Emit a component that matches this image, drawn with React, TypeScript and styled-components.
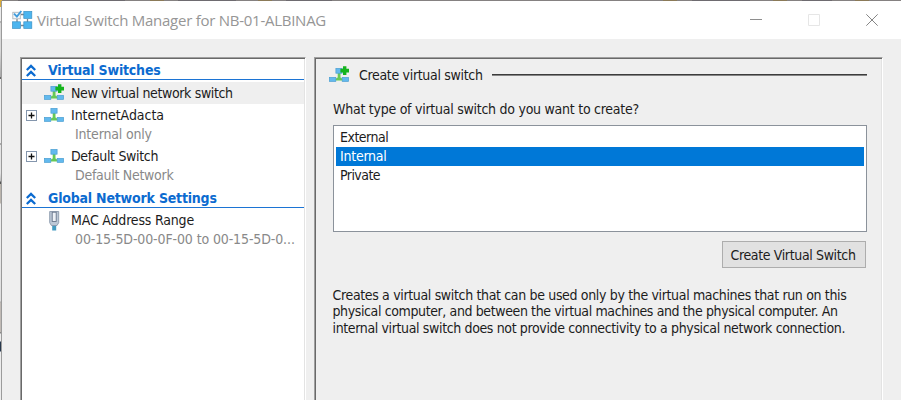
import React from 'react';
import styled, { createGlobalStyle } from 'styled-components';

const Global = createGlobalStyle`
  * { box-sizing: border-box; }
  body { margin: 0; overflow: hidden; }
`;

const Desktop = styled.div`
  display: grid;
  grid-template: 1px 399px / 1px 900px;
  width: 901px;
  height: 400px;
  overflow: hidden;
  background: #e9e9e9;
`;

const TopEdge = styled.div`
  grid-column: 1 / 3;
  background: linear-gradient(90deg, #d9ab3a 0 2px, #858181 2px 18px, #6e6b70 18px 125px, #858181 125px 150px,
    #8b7a58 150px 164px, #858181 164px 178px, #6e6b70 178px 236px, #858181 236px 258px, #8b7a58 258px 272px,
    #858181 272px 286px, #6e6b70 286px 332px, #858181 332px 663px, #8b7a58 663px 677px, #858181 677px 692px,
    #6e6b70 692px 750px, #858181 750px 773px, #8b7a58 773px 787px, #858181 787px 802px, #6e6b70 802px 832px,
    #858181 832px 855px, #8b7a58 855px 869px, #858181 869px);
`;

const LeftEdge = styled.div`
  background: linear-gradient(#d9ab3a 0 6px, #ececec 6px 20px, #b4b4b4 20px 22px, #d8d8d8 22px 50px, #a8a8a8 76px,
    #666 76px 78px, #ececec 78px 142px, #aaa 142px 144px, #e4e4e4 144px 172px, #bbb 180px, #555 181px 183px,
    #bab4ac 183px 202px, #ececec 203px 240px, #ddd 300px, #aaa 301px, #c0bab5 302px 331px, #888 331px 332px,
    #ececec 333px 340px, #27384d 341px 350px, #ececec 351px);
`;

const Window = styled.div`
  display: flex;
  flex-direction: column;
  border-left: 1px solid #9b9b9b;
  background: #efefef;
  font-family: 'DejaVu Sans Condensed', 'DejaVu Sans', sans-serif;
  font-size: 14px;
  color: #1c1c1c;
`;

const TitleBar = styled.header`
  display: flex;
  align-items: center;
  height: 38px;
  flex: none;
  padding-left: 10px;
  background: #fff;
`;

const Title = styled.h1`
  flex: 1;
  margin: 0 0 0 4px;
  font: 400 15px/20px 'Open Sans', 'Noto Sans', sans-serif;
  letter-spacing: -0.26px;
  color: #969696;
`;

const Controls = styled.div`
  display: flex;
  gap: 46px;
  padding-right: 23px;
`;

const Panes = styled.main`
  display: grid;
  grid-template-columns: 286px 569px;
  gap: 8px;
  flex: 1;
  padding: 18px 0 0 18px;
`;

const Pane = styled.section<{ $fill: string }>`
  border: 1px solid #a0a0a0;
  border-right-color: #fff;
  border-bottom: 0;
  box-shadow: inset 1px 1px #696969, inset -1px 0 #e3e3e3;
  background: ${p => p.$fill};
`;

const Tree = styled.nav`
  display: flex;
  flex-direction: column;
  padding: 1px 1px 0;
`;

const Heading = styled.h2<{ $top?: number; $bottom?: number }>`
  display: flex;
  align-items: center;
  height: 21px;
  margin: ${p => p.$top || 0}px 0 ${p => p.$bottom || 0}px;
  padding: 2px 0 0 4px;
  border-bottom: 1px solid #1c74d4;
  font: bold 14px/18px 'DejaVu Sans Condensed', 'DejaVu Sans', sans-serif;
  color: #0c6bd0;
`;

const Label = styled.span<{ $track: number }>`
  white-space: nowrap;
  letter-spacing: ${p => p.$track}px;
`;

const HeadingLabel = styled(Label)`
  margin-left: 12px;
`;

const TreeRow = styled.div<{ $active?: boolean }>`
  display: grid;
  grid-template-columns: 18px 27px 1fr;
  align-items: center;
  height: 22px;
  padding-left: 4px;
  background: ${p => (p.$active ? '#efefef' : 'transparent')};
`;

const Detail = styled.div`
  height: 19px;
  padding-left: 53px;
  line-height: 17px;
  color: #898989;
`;

const Form = styled.div`
  padding: 7px 15px 0 18px;
`;

const FormHead = styled.div`
  display: flex;
  align-items: center;
  height: 20px;
  margin-left: -4px;
`;

const FormTitle = styled(Label)`
  margin-left: 10px;
  width: 133px;
`;

const Rule = styled.div`
  flex: 1;
  height: 2px;
  border-top: 1px solid #3c3c3c;
  border-bottom: 1px solid #868686;
`;

const Question = styled.div`
  height: 23px;
  margin-top: 16px;
  line-height: 17px;
`;

const List = styled.ul`
  height: 107px;
  margin: 1px 0 0;
  padding: 2px;
  list-style: none;
  border: 1px solid #8b929b;
  background: #fff;
`;

const Option = styled.li<{ $selected?: boolean }>`
  height: 19px;
  padding-left: 4px;
  line-height: 18px;
  background: ${p => (p.$selected ? '#0078d7' : 'transparent')};
  color: ${p => (p.$selected ? '#fff' : 'inherit')};
`;

const Actions = styled.div`
  display: flex;
  justify-content: flex-end;
  padding: 9px 1px 0 0;
`;

const Button = styled.button`
  width: 144px;
  height: 27px;
  padding: 0 2px 0 0;
  border: 1px solid #adadad;
  background: #e1e1e1;
  color: inherit;
  font: inherit;
`;

const Description = styled.p`
  display: flex;
  flex-direction: column;
  margin: 19px 0 0 -0.5px;
  line-height: 16.4px;
`;

const Chevrons = () => (
  <svg width="10" height="13" viewBox="0 0 10 13" fill="none" stroke="#0c6bd0" strokeWidth="2.3">
    <path d="M.8 6 5 1.9 9.2 6M.8 12 5 7.9 9.2 12" />
  </svg>
);

const Expander = () => (
  <svg width="11" height="11" viewBox="0 0 11 11">
    <rect x=".5" y=".5" width="10" height="10" fill="#fff" stroke="#8496ad" />
    <path d="M2.5 5.5h6M5.5 2.5v6" stroke="#111" strokeWidth="1.3" />
  </svg>
);

const SwitchIcon = ({ plus }: { plus?: boolean }) => (
  <svg width="20" height="18" viewBox="0 0 20 18">
    <path d="M8.7 7h2.8v4.5l2 1.2v1.8h-7v-1.8l2.2-1.2z" fill="#66c956" />
    <rect x="6.9" y="2.4" width="6.2" height="4.8" fill="#62b9ee" stroke="#4c9fd2" strokeWidth=".7" />
    <rect x=".4" y="11.4" width="6.4" height="4" fill="#62b9ee" stroke="#4c9fd2" strokeWidth=".7" />
    <rect x="13.2" y="11.4" width="6.4" height="4" fill="#62b9ee" stroke="#4c9fd2" strokeWidth=".7" />
    {plus && <path d="M14 .2h3.4v2.6H20v3.6h-2.6V9H14V6.4h-2.6V2.8H14z" fill="#15b41c" />}
  </svg>
);

const AdapterIcon = () => (
  <svg width="20" height="21" viewBox="-5 0 20 21">
    <path d="M3.2 15h4v5.5h-4z" fill="#459bc0" />
    <path d="M.7 1.5h9v11.2L8 15.5H2.4L.7 12.7z" fill="#bdc8d6" stroke="#8a98ab" strokeWidth=".9" />
    <rect x="3.2" y="2.2" width="4" height="9.3" fill="#edf1f6" stroke="#68768a" strokeWidth=".9" />
  </svg>
);

const AppIcon = () => (
  <svg width="21" height="20" viewBox="0 0 21 20">
    <path d="M9 4.5h3M5 9v3M15.5 9v3M9 15.5h3" stroke="#7c858d" strokeWidth="1.3" />
    <rect x=".8" y="2.3" width="7.5" height="6.5" fill="#f5f8fa" stroke="#b0b6bc" strokeWidth=".9" />
    <path d="m2 3.6 2.9 3L9.3 1" fill="none" stroke="#3f9bdc" strokeWidth="1.9" />
    <rect x="11.8" y="1.4" width="8" height="7" fill="#4cb5ef" stroke="#3b92c6" strokeWidth=".7" />
    <rect x=".5" y="11.8" width="8" height="6.6" fill="#4cb5ef" stroke="#3b92c6" strokeWidth=".7" />
    <rect x="11.8" y="11.8" width="8" height="6.6" fill="#4cb5ef" stroke="#3b92c6" strokeWidth=".7" />
  </svg>
);

const ControlIcon = ({ d, color }: { d: string; color: string }) => (
  <svg width="12" height="12" viewBox="0 0 12 12" fill="none" stroke={color}>
    <path d={d} />
  </svg>
);

export default function App() {
  return (
    <Desktop>
      <Global />
      <TopEdge />
      <LeftEdge />
      <Window>
        <TitleBar>
          <AppIcon />
          <Title>Virtual Switch Manager for NB-01-ALBINAG</Title>
          <Controls>
            <ControlIcon d="M0 5.5h12" color="#8e8e8e" />
            <ControlIcon d="M.5.5h11v11H.5z" color="#e6e6e6" />
            <ControlIcon d="m.3.3 11.4 11.4M11.7.3.3 11.7" color="#858585" />
          </Controls>
        </TitleBar>
        <Panes>
          <Pane $fill="#fff">
            <Tree>
              <Heading $bottom={2}>
                <Chevrons />
                <HeadingLabel $track={-0.2}>Virtual Switches</HeadingLabel>
              </Heading>
              <TreeRow $active>
                <span />
                <SwitchIcon plus />
                <Label $track={-0.36}>New virtual network switch</Label>
              </TreeRow>
              <TreeRow>
                <Expander />
                <SwitchIcon />
                <Label $track={-0.05}>InternetAdacta</Label>
              </TreeRow>
              <Detail>
                <Label $track={-0.18}>Internal only</Label>
              </Detail>
              <TreeRow>
                <Expander />
                <SwitchIcon />
                <Label $track={-0.33}>Default Switch</Label>
              </TreeRow>
              <Detail>
                <Label $track={-0.28}>Default Network</Label>
              </Detail>
              <Heading $top={1} $bottom={1}>
                <Chevrons />
                <HeadingLabel $track={-0.2}>Global Network Settings</HeadingLabel>
              </Heading>
              <TreeRow>
                <span />
                <AdapterIcon />
                <Label $track={-0.18}>MAC Address Range</Label>
              </TreeRow>
              <Detail>
                <Label $track={-0.12}>00-15-5D-00-0F-00 to 00-15-5D-0...</Label>
              </Detail>
            </Tree>
          </Pane>
          <Pane $fill="#efefef">
            <Form>
              <FormHead>
                <SwitchIcon plus />
                <FormTitle $track={-0.32}>Create virtual switch</FormTitle>
                <Rule />
              </FormHead>
              <Question>
                <Label $track={-0.26}>What type of virtual switch do you want to create?</Label>
              </Question>
              <List>
                <Option>
                  <Label $track={-0.5}>External</Label>
                </Option>
                <Option $selected>
                  <Label $track={-0.25}>Internal</Label>
                </Option>
                <Option>
                  <Label $track={-0.55}>Private</Label>
                </Option>
              </List>
              <Actions>
                <Button>
                  <Label $track={-0.36}>Create Virtual Switch</Label>
                </Button>
              </Actions>
              <Description>
                <Label $track={-0.345}>Creates a virtual switch that can be used only by the virtual machines that run on this</Label>
                <Label $track={-0.385}>physical computer, and between the virtual machines and the physical computer. An</Label>
                <Label $track={-0.365}>internal virtual switch does not provide connectivity to a physical network connection.</Label>
              </Description>
            </Form>
          </Pane>
        </Panes>
      </Window>
    </Desktop>
  );
}
